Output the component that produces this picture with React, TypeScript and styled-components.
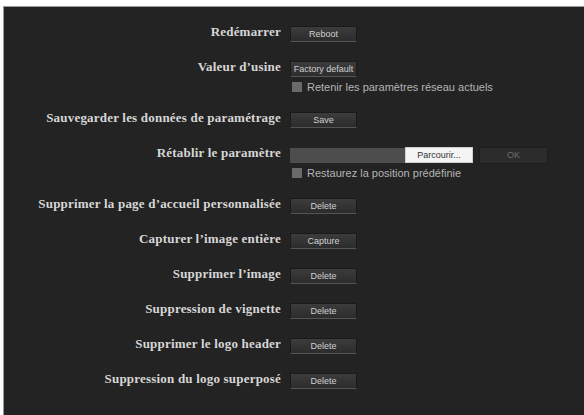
import { styled, createGlobalStyle } from 'styled-components';

const GlobalStyle = createGlobalStyle`
  html, body {
    margin: 0;
    padding: 0;
    background: #ffffff;
  }
  body {
    font-family: 'Liberation Sans', Arial, sans-serif;
  }
`;

const Page = styled.div`
  width: 584px;
  height: 415px;
  padding: 6px 0 0 3px;
  box-sizing: border-box;
  overflow: hidden;
`;

const Panel = styled.div`
  height: 100%;
  box-sizing: border-box;
  background: #232323;
  border-top: 1px solid #9a9a9a;
  border-left: 1px solid #9a9a9a;
  padding-top: 19px;
  display: flex;
  flex-direction: column;
  gap: 19px;
`;

const Row = styled.div`
  display: grid;
  grid-template-columns: 277px 1fr;
  column-gap: 9px;
  align-items: start;
`;

const Label = styled.div`
  margin-top: -2px;
  font-family: 'Liberation Serif', 'Times New Roman', serif;
  font-weight: 700;
  font-size: 13px;
  letter-spacing: 0.2px;
  line-height: 16px;
  color: #d6d6d6;
  text-align: right;
  white-space: nowrap;
`;

const Controls = styled.div`
  display: flex;
  flex-direction: column;
  gap: 4px;
`;

const Button = styled.button`
  width: 67px;
  height: 16px;
  padding: 0;
  border: 1px solid #1a1a1a;
  border-bottom-color: #555;
  background: linear-gradient(#3c3c3c, #2c2c2c);
  color: #d0d0d0;
  font-family: 'Liberation Sans', Arial, sans-serif;
  font-size: 9px;
  line-height: 14px;
  text-align: center;
  white-space: nowrap;
`;

const FileRow = styled.div`
  display: flex;
  align-items: center;
  height: 16px;
`;

const FileField = styled.div`
  width: 115px;
  height: 15px;
  background: #4d4d4d;
`;

const BrowseButton = styled.div`
  width: 66px;
  height: 14px;
  background: #f4f4f4;
  border: 1px solid #cfcfcf;
  color: #333;
  font-size: 9px;
  line-height: 14px;
  text-align: center;
`;

const OkButton = styled.div`
  margin-left: 6px;
  width: 67px;
  height: 15px;
  background: #2c2c2c;
  border: 1px solid #1e1e1e;
  color: #6e6e6e;
  font-size: 9px;
  line-height: 15px;
  text-align: center;
`;

const CheckLine = styled.label`
  display: flex;
  align-items: center;
  gap: 5px;
  height: 12px;
  padding-left: 2px;
  font-size: 11px;
  color: #b4b4b4;
  white-space: nowrap;
`;

const Box = styled.span`
  width: 10px;
  height: 10px;
  background: #6a6a6a;
  flex: none;
`;

const deleteRows = [
  'Supprimer l\u2019image',
  'Suppression de vignette',
  'Supprimer le logo header',
  'Suppression du logo superposé',
];

const App = () => (
  <Page>
    <GlobalStyle />
    <Panel>
      <Row>
        <Label>Redémarrer</Label>
        <Controls>
          <Button>Reboot</Button>
        </Controls>
      </Row>
      <Row>
        <Label>Valeur d’usine</Label>
        <Controls>
          <Button>Factory default</Button>
          <CheckLine>
            <Box />
            Retenir les paramètres réseau actuels
          </CheckLine>
        </Controls>
      </Row>
      <Row>
        <Label>Sauvegarder les données de paramétrage</Label>
        <Controls>
          <Button>Save</Button>
        </Controls>
      </Row>
      <Row>
        <Label>Rétablir le paramètre</Label>
        <Controls>
          <FileRow>
            <FileField />
            <BrowseButton>Parcourir...</BrowseButton>
            <OkButton>OK</OkButton>
          </FileRow>
          <CheckLine>
            <Box />
            Restaurez la position prédéfinie
          </CheckLine>
        </Controls>
      </Row>
      <Row>
        <Label>Supprimer la page d’accueil personnalisée</Label>
        <Controls>
          <Button>Delete</Button>
        </Controls>
      </Row>
      <Row>
        <Label>Capturer l’image entière</Label>
        <Controls>
          <Button>Capture</Button>
        </Controls>
      </Row>
      {deleteRows.map((label) => (
        <Row key={label}>
          <Label>{label}</Label>
          <Controls>
            <Button>Delete</Button>
          </Controls>
        </Row>
      ))}
    </Panel>
  </Page>
);

export default App;
